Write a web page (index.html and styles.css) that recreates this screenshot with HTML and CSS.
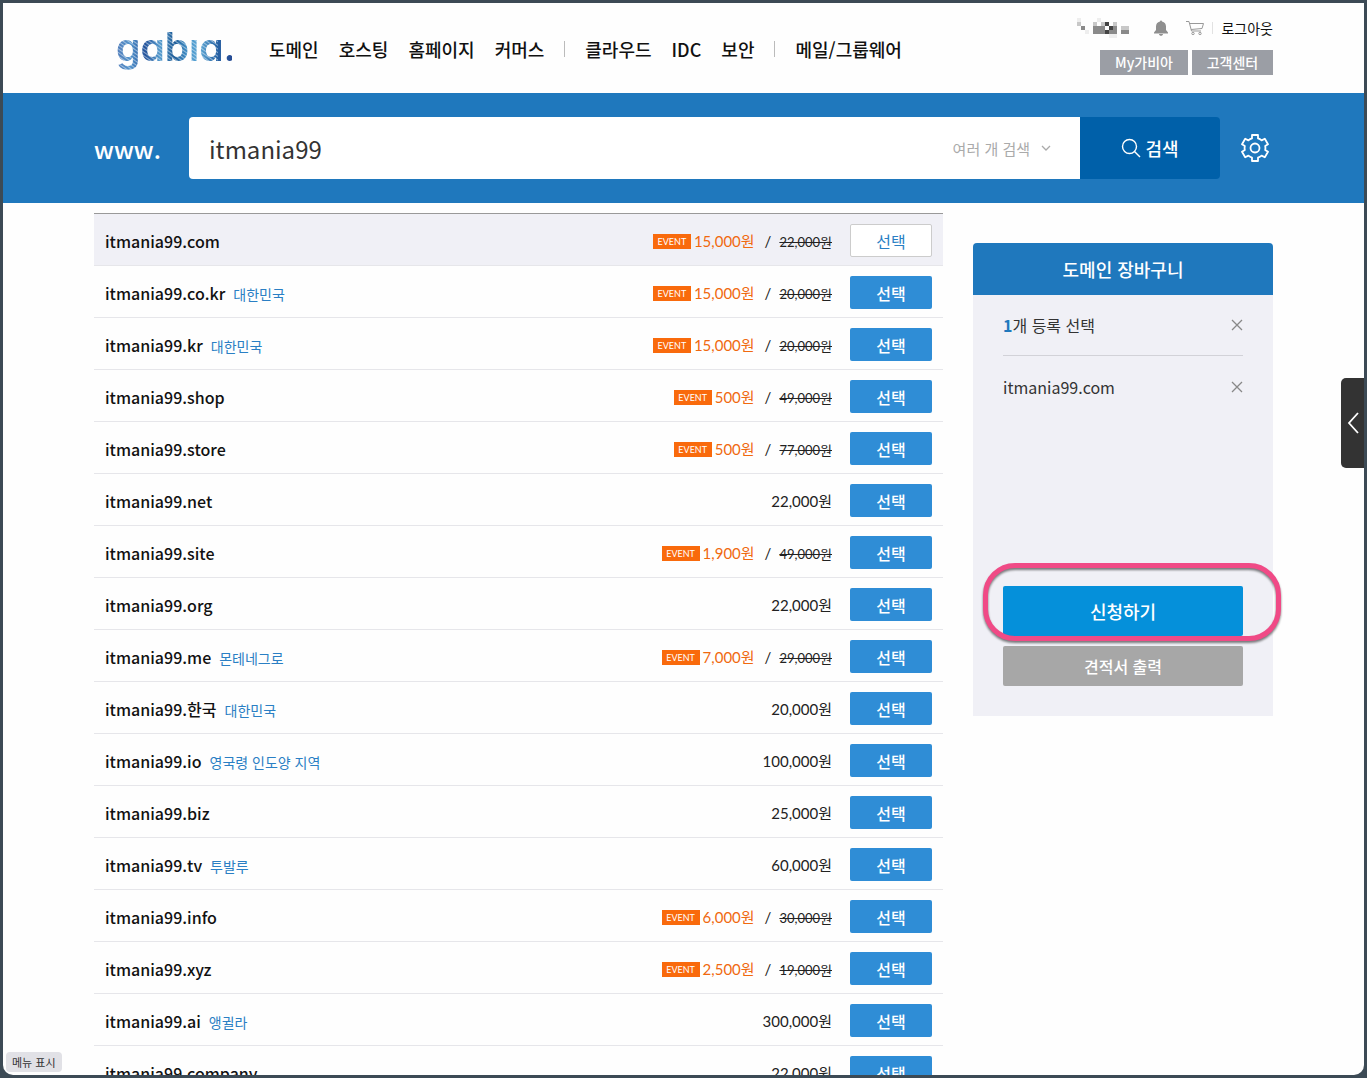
FILE: index.html
```html
<!DOCTYPE html>
<html lang="ko">
<head>
<meta charset="utf-8">
<meta name="viewport" content="width=device-width, initial-scale=1">
<title>가비아 도메인 검색</title>
<link rel="stylesheet" href="styles.css">
</head>
<body>
<div class="window">
  <header class="header">
    <div class="wrap header-row">
      <a class="logo" href="#" aria-label="gabia">
        <svg width="116" height="56" viewBox="0 0 116 56">
          <defs>
            <linearGradient id="ink" x1="0" y1="0" x2="116" y2="0" gradientUnits="userSpaceOnUse">
              <stop offset="0" stop-color="#4f7ab8"/><stop offset=".12" stop-color="#5394cc"/>
              <stop offset=".25" stop-color="#23529a"/><stop offset=".38" stop-color="#569cce"/>
              <stop offset=".5" stop-color="#1c5a96"/><stop offset=".62" stop-color="#4492ca"/>
              <stop offset=".72" stop-color="#60a9d6"/><stop offset=".86" stop-color="#2866a6"/>
              <stop offset="1" stop-color="#254a94"/>
            </linearGradient>
            <pattern id="lines" width="3" height="3" patternUnits="userSpaceOnUse" patternTransform="rotate(35)">
              <rect width="3" height="3" fill="#fff"/><rect width="3" height="1" fill="#888"/>
            </pattern>
            <mask id="hatch" maskUnits="userSpaceOnUse" x="0" y="0" width="116" height="56">
              <rect width="116" height="56" fill="url(#lines)"/><rect x="102" width="14" height="56" fill="#fff"/>
            </mask>
          </defs>
          <text class="logo-text" x="0" y="40" fill="url(#ink)" mask="url(#hatch)">gabıa.</text>
        </svg>
      </a>
      <nav class="nav">
        <a href="#">도메인</a><a href="#">호스팅</a><a href="#">홈페이지</a><a href="#">커머스</a>
        <span class="bar"></span>
        <a href="#">클라우드</a><a href="#">IDC</a><a href="#">보안</a>
        <span class="bar"></span>
        <a href="#">메일/그룹웨어</a>
      </nav>
      <div class="user">
        <div class="user-top">
          <svg class="mosaic" width="56" height="20" viewBox="0 0 56 20" shape-rendering="crispEdges" aria-hidden="true">
            <path fill="#eee" d="M0 0h4v4H0zM20 0h4v4h-4zM8 12h4v4H8zM32 16h8v4h-8z"/>
            <path fill="#c8c8c8" d="M0 4h4v4H0zM16 4h4v4h-4zM24 4h4v4h-4zM36 4h4v4h-4zM16 12h4v4h-4zM44 8h8v4h-8z"/>
            <path fill="#8a8a8a" d="M4 8h4v4H4zM16 8h12v8H16zM32 8h8v8h-8zM44 12h8v4h-8z"/>
            <path fill="#444" d="M28 4h4v4h-4zM32 8h4v4h-4zM28 12h4v4h-4z"/>
          </svg>
          <svg class="bell" width="16" height="16" viewBox="0 0 16 16" aria-hidden="true"><path fill="#8f8f8f" d="M7 1.500a1 1 0 0 1 2 0C11.700 2 13 4 13 6.500V10l2 2.500v1H1v-1L3 10V6.500C3 4 4.300 2 7 1.500zM6 14h4c0 2.400-4 2.400-4 0z"/></svg>
          <svg class="cart" width="18" height="16" viewBox="0 0 18 16" fill="none" stroke="#999" aria-hidden="true"><path d="M0 1.500h3L5.500 11h9.500M3.500 3.500h14L16 8.500 5 9.500"/><circle cx="7" cy="13.500" r="1.200"/><circle cx="14" cy="13.500" r="1.200"/></svg>
          <span class="user-bar"></span>
          <a class="logout" href="#">로그아웃</a>
        </div>
        <div class="user-links"><a class="my" href="#">My가비아</a><a href="#">고객센터</a></div>
      </div>
    </div>
  </header>

  <section class="search">
    <form class="wrap search-row">
      <label class="www" for="domain">www.</label>
      <div class="field">
        <input id="domain" type="text" value="itmania99">
        <button class="multi" type="button">여러 개 검색
          <svg width="10" height="6" viewBox="0 0 10 6" fill="none" stroke="#aaa" stroke-width="1.300"><path d="M1 1l4 4 4-4"/></svg>
        </button>
      </div>
      <button class="go" type="submit">
        <svg width="20" height="20" viewBox="0 0 20 20" fill="none" stroke="#fff" stroke-width="1.400"><circle cx="8.500" cy="8.500" r="7"/><path d="M13.500 13.500l5.500 5.500"/></svg>검색
      </button>
      <button class="gear" type="button" aria-label="설정">
        <svg width="28" height="28" viewBox="0 0 28 28" fill="none" stroke="#fff" stroke-width="1.800" stroke-linejoin="round"><path d="M11 1h6v3.400c1.400.4 2.600 1.100 3.600 2L23.800 4.800l3.200 5.400-2.800 1.800c.3 1.400.3 2.600 0 4l2.800 1.800-3.200 5.400-3.200-1.600c-1 .9-2.200 1.600-3.600 2V27h-6v-3.400c-1.400-.4-2.600-1.100-3.600-2l-3.200 1.600L1 17.800 3.800 16c-.3-1.400-.3-2.600 0-4L1 10.200l3.200-5.400 3.200 1.600c1-.9 2.200-1.600 3.600-2z"/><circle cx="14" cy="14" r="4.500"/></svg>
      </button>
    </form>
  </section>

  <main class="wrap content">
    <table class="domains">
      <tbody>
        <tr class="picked"><th scope="row">itmania99.com</th><td class="price"><em>EVENT</em><b>15,000원</b><i>/</i><s>22,000원</s></td><td class="pick"><button type="button">선택</button></td></tr>
        <tr><th scope="row">itmania99.co.kr<small>대한민국</small></th><td class="price"><em>EVENT</em><b>15,000원</b><i>/</i><s>20,000원</s></td><td class="pick"><button type="button">선택</button></td></tr>
        <tr><th scope="row">itmania99.kr<small>대한민국</small></th><td class="price"><em>EVENT</em><b>15,000원</b><i>/</i><s>20,000원</s></td><td class="pick"><button type="button">선택</button></td></tr>
        <tr><th scope="row">itmania99.shop</th><td class="price"><em>EVENT</em><b>500원</b><i>/</i><s>49,000원</s></td><td class="pick"><button type="button">선택</button></td></tr>
        <tr><th scope="row">itmania99.store</th><td class="price"><em>EVENT</em><b>500원</b><i>/</i><s>77,000원</s></td><td class="pick"><button type="button">선택</button></td></tr>
        <tr><th scope="row">itmania99.net</th><td class="price">22,000원</td><td class="pick"><button type="button">선택</button></td></tr>
        <tr><th scope="row">itmania99.site</th><td class="price"><em>EVENT</em><b>1,900원</b><i>/</i><s>49,000원</s></td><td class="pick"><button type="button">선택</button></td></tr>
        <tr><th scope="row">itmania99.org</th><td class="price">22,000원</td><td class="pick"><button type="button">선택</button></td></tr>
        <tr><th scope="row">itmania99.me<small>몬테네그로</small></th><td class="price"><em>EVENT</em><b>7,000원</b><i>/</i><s>29,000원</s></td><td class="pick"><button type="button">선택</button></td></tr>
        <tr><th scope="row">itmania99.한국<small>대한민국</small></th><td class="price">20,000원</td><td class="pick"><button type="button">선택</button></td></tr>
        <tr><th scope="row">itmania99.io<small>영국령 인도양 지역</small></th><td class="price">100,000원</td><td class="pick"><button type="button">선택</button></td></tr>
        <tr><th scope="row">itmania99.biz</th><td class="price">25,000원</td><td class="pick"><button type="button">선택</button></td></tr>
        <tr><th scope="row">itmania99.tv<small>투발루</small></th><td class="price">60,000원</td><td class="pick"><button type="button">선택</button></td></tr>
        <tr><th scope="row">itmania99.info</th><td class="price"><em>EVENT</em><b>6,000원</b><i>/</i><s>30,000원</s></td><td class="pick"><button type="button">선택</button></td></tr>
        <tr><th scope="row">itmania99.xyz</th><td class="price"><em>EVENT</em><b>2,500원</b><i>/</i><s>19,000원</s></td><td class="pick"><button type="button">선택</button></td></tr>
        <tr><th scope="row">itmania99.ai<small>앵귈라</small></th><td class="price">300,000원</td><td class="pick"><button type="button">선택</button></td></tr>
        <tr><th scope="row">itmania99.company</th><td class="price">22,000원</td><td class="pick"><button type="button">선택</button></td></tr>
      </tbody>
    </table>

    <aside class="basket">
      <h2>도메인 장바구니</h2>
      <div class="basket-body">
        <div class="basket-row total"><span><strong>1</strong>개 등록 선택</span>
          <button class="x" type="button" aria-label="모두 삭제"><svg width="12" height="12" viewBox="0 0 12 12" stroke="#888" stroke-width="1.300"><path d="M1 1l10 10M11 1L1 11"/></svg></button></div>
        <div class="basket-items">
          <div class="basket-row"><span>itmania99.com</span>
            <button class="x" type="button" aria-label="삭제"><svg width="12" height="12" viewBox="0 0 12 12" stroke="#888" stroke-width="1.300"><path d="M1 1l10 10M11 1L1 11"/></svg></button></div>
        </div>
        <div class="apply-box"><button class="apply" type="button">신청하기</button><span class="ring"></span></div>
        <button class="quote" type="button">견적서 출력</button>
      </div>
    </aside>
  </main>

  <button class="drawer" type="button" aria-label="열기"><svg width="12" height="22" viewBox="0 0 12 22" fill="none" stroke="#fff" stroke-width="1.800"><path d="M11 1L2 11l9 10"/></svg></button>
  <div class="tip">메뉴 표시</div>
</div>
</body>
</html>
```
FILE: styles.css
```css
* { box-sizing: border-box; }
body {
  margin: 0;
  background: #3c4a55;
  color: #111;
  font-family: "Noto Sans CJK KR", sans-serif;
  font-size: 16px;
}
a { color: inherit; text-decoration: none; }
button, input { margin: 0; border: 0; padding: 0; font: inherit; color: inherit; background: none; }
svg { display: block; }

.window {
  position: relative;
  height: calc(100vh - 6px);
  margin: 3px;
  overflow: hidden;
  background: #fefefe;
  border-radius: 0 0 10px 10px;
}
.wrap { max-width: 1179px; margin: 0 auto; }

.header { height: 90px; }
.header-row { display: flex; height: 90px; align-items: center; padding: 2px 0 0 22px; }
.logo { margin-right: 37px; }
.logo svg { overflow: visible; }
.logo-text { font: 600 39px Inter, sans-serif; font-feature-settings: "cv11"; }
.nav { display: flex; align-items: center; gap: 20px; font-size: 18px; font-weight: 500; white-space: nowrap; }
.bar { width: 1px; height: 16px; background: #bbb; }
.user { margin-left: auto; }
.user-top { display: flex; align-items: center; justify-content: flex-end; height: 24px; margin-bottom: 10px; font-size: 14px; }
.bell { margin-left: 20px; }
.cart { margin-left: 17px; }
.user-bar { width: 1px; height: 12px; margin: 0 8px; background: #e2e2e2; }
.user-links { display: flex; justify-content: flex-end; gap: 4px; margin-bottom: 8px; }
.user-links a {
  width: 81px; height: 25px; line-height: 24px;
  background: #9b9ea5; color: #fff; font-size: 14px; font-weight: 500; text-align: center;
}
.user-links .my { width: 88px; }

.search { background: #1f78bd; }
.search-row { display: flex; height: 110px; align-items: center; }
.www { width: 95px; color: #fff; font-size: 24px; font-weight: 500; }
.field {
  display: flex; flex: 1; height: 62px; align-items: center; padding: 0 29px 0 20px;
  background: #fff; border-radius: 4px 0 0 4px;
}
.field input { flex: 1; min-width: 0; height: 62px; color: #333; font-size: 24px; outline: 0; }
.multi { display: flex; align-items: center; gap: 11px; color: #aaa; font-size: 15px; }
.go {
  display: flex; width: 140px; height: 62px; align-items: center; justify-content: center; gap: 4px;
  background: #0060a9; border-radius: 0 4px 4px 0; color: #fff; font-size: 18px; font-weight: 500;
}
.gear { margin: 0 4px 0 21px; }

.content { display: flex; align-items: flex-start; gap: 30px; padding-top: 10px; }
.domains { flex: 1; width: 100%; border-spacing: 0; border-top: 1px solid #999; }
.domains th, .domains td { height: 52px; padding: 2px 0 0; border-bottom: 1px solid #e6e6ea; }
.domains th { padding-left: 11px; font-size: 16px; font-weight: 500; text-align: left; }
.domains small { margin-left: 8px; color: #2a7fc4; font-size: 14px; font-weight: 400; }
.picked th, .picked td { background: #f0f0f6; }
.domains .price { color: #222; font-family: Lato, "Noto Sans CJK KR", sans-serif; font-size: 15px; text-align: right; white-space: nowrap; }
.price em {
  display: inline-block; width: 38px; margin-right: 3px; background: #f96a0c; color: #fff;
  font-size: 9px; line-height: 15px; font-style: normal; text-align: center; vertical-align: 2px;
}
.price b { color: #f0690f; font-weight: 400; }
.price i { margin: 0 8px 0 10px; font-style: normal; }
.price s { font-size: 13px; }
.domains .pick { width: 111px; padding: 2px 11px 0 18px; }
.pick button {
  display: block; width: 82px; height: 33px; background: #2f8dd6; border-radius: 2px;
  color: #fff; font-size: 16px; font-weight: 500; line-height: 28px;
}
.picked .pick button { border: 1px solid #ccc; background: #fff; color: #2a7fc4; font-weight: 400; line-height: 28px; }

.basket { width: 300px; margin-top: 30px; background: #f0f0f6; border-radius: 4px 4px 0 0; }
.basket h2 {
  margin: 0; background: #1f78bd; border-radius: 4px 4px 0 0; color: #fff;
  font-size: 18px; font-weight: 500; line-height: 52px; text-align: center;
}
.basket-body { padding: 0 30px 30px; color: #333; }
.basket-row { display: flex; height: 62px; align-items: center; justify-content: space-between; }
.total { height: 61px; border-bottom: 1px solid #d2d2d8; }
.total strong { color: #1f78bd; }
.basket-items { min-height: 230px; }
.x { padding: 0; }
.apply-box { position: relative; }
.apply, .quote { display: block; width: 100%; border-radius: 2px; color: #fff; font-weight: 500; }
.apply { height: 50px; background: #0590da; font-size: 18px; }
.quote { height: 40px; margin-top: 10px; background: #a7a7a7; }
.ring {
  position: absolute; inset: -23px -38px -5px -20px; border: 5px solid #f04a86; border-radius: 32px;
  filter: drop-shadow(0 2px 1px rgba(0, 0, 0, .5)); pointer-events: none;
}

.drawer {
  position: absolute; top: 375px; right: 0; display: flex; width: 23px; height: 90px;
  align-items: center; justify-content: center; background: #333; border-radius: 5px 0 0 5px;
}
.tip {
  position: absolute; bottom: 3px; left: 3px; padding: 0 6px; background: #e1e1e6; border-radius: 4px;
  color: #333; font-size: 11px; line-height: 20px;
}
```
